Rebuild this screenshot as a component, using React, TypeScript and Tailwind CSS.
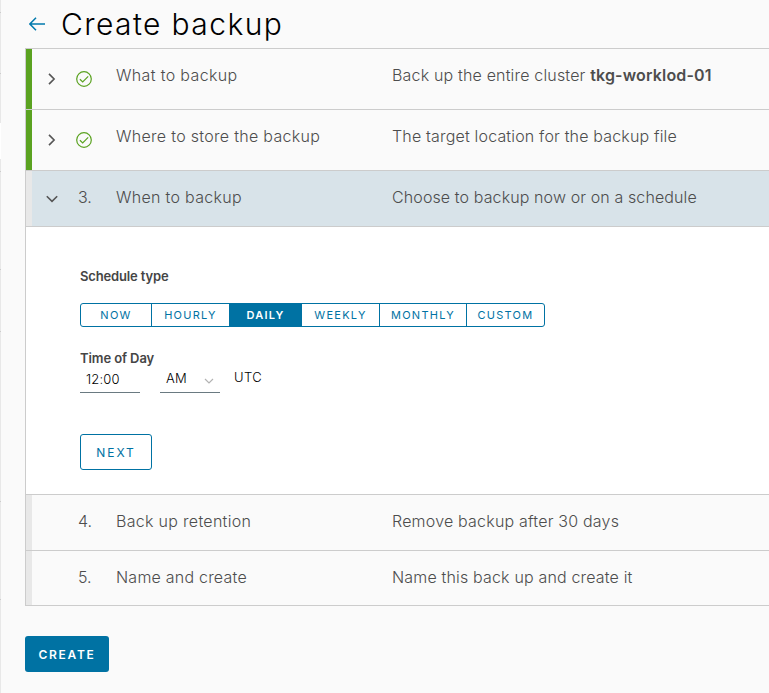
import React from "react";

const Chevron = ({ down = false }: { down?: boolean }) => (
  <svg width="12" height="12" viewBox="0 0 12 12" fill="none" stroke="#555" strokeWidth="1.6">
    {down ? <path d="M.8 3.2 6 8.4 11.2 3.2" /> : <path d="M3 .9 8.1 6 3 11.1" />}
  </svg>
);

const CheckCircle = () => (
  <svg width="16" height="16" viewBox="0 0 16 16" fill="none" stroke="#5aa220" strokeWidth="1.2">
    <circle cx="8" cy="8" r="7.3" />
    <path d="M3.9 8.2 6.7 10.9 12.2 5.4" />
  </svg>
);

type RowProps = {
  title: string;
  titleClass: string;
  description: React.ReactNode;
  descClass: string;
  number?: string;
  state: "done" | "active" | "todo";
  className: string;
};

function StepRow({ title, titleClass, description, descClass, number, state, className }: RowProps) {
  return (
    <div className={`flex border-t border-[#ccc] text-base leading-6 text-[#4d4d4d] ${className}`}>
      <div className={`w-1.5 shrink-0 ${state === "done" ? "bg-[#5aa220]" : "bg-[#e8e8e8]"}`} />
      <div className="flex w-[46px] shrink-0 pl-3.5">
        {state !== "todo" && (
          <div className={state === "done" ? "pt-6" : "pt-[22px]"}>
            <Chevron down={state === "active"} />
          </div>
        )}
      </div>
      <div className="w-[38px] shrink-0">
        {state === "done" ? (
          <div className="-ml-0.5 pt-[22px]"><CheckCircle /></div>
        ) : (
          <div className="pt-3.5">{number}</div>
        )}
      </div>
      <div className={`w-[276px] shrink-0 whitespace-nowrap pt-3.5 ${titleClass}`}>{title}</div>
      <div className={`whitespace-nowrap pt-3.5 ${descClass}`}>{description}</div>
    </div>
  );
}

const schedules = [
  { label: "NOW", width: "w-[70px]" },
  { label: "HOURLY", width: "w-[78px]" },
  { label: "DAILY", width: "w-[72px]" },
  { label: "WEEKLY", width: "w-[78px]" },
  { label: "MONTHLY", width: "w-[87px]" },
  { label: "CUSTOM", width: "w-[78px]" },
];

export default function App() {
  return (
    <div className="flex h-[693px] w-[769px] overflow-hidden bg-[#fafafa] font-['Inter',sans-serif] font-light">
      <div className="flex w-px shrink-0 flex-col bg-[#e8e8e8]">
        <div className="mt-3 h-px bg-[#ccc]" />
        <div className="mt-[60px] h-px bg-[#ccc]" />
        <div className="mt-[49px] h-9 bg-white" />
        <div className="mt-3 h-px bg-[#ccc]" />
        <div className="mt-[97px] h-px bg-[#ccc]" />
        <div className="mt-[61px] h-px bg-[#ccc]" />
        <div className="mt-[169px] h-px bg-[#ccc]" />
        <div className="mt-[97px] h-px bg-[#ccc]" />
      </div>
      <div className="flex min-w-0 grow flex-col pl-6">
        <header className="flex h-12 shrink-0 items-center gap-[15px]">
          <svg className="ml-1" width="17" height="14" viewBox="0 0 17 14" fill="none" stroke="#0079ad" strokeWidth="1.5">
            <path d="M16 7H1M7 .8.9 7 7 13.2" />
          </svg>
          <h1 className="whitespace-nowrap text-[30px] leading-9 tracking-[1.4px] text-black">Create backup</h1>
        </header>
        <main className="shrink-0 border-b border-l border-[#ccc]">
          <StepRow
            state="done"
            className="h-[61px]"
            title="What to backup"
            titleClass="tracking-[0.35px]"
            description={<>Back up the entire cluster <b className="font-semibold">tkg-worklod-01</b></>}
            descClass="tracking-[0.17px]"
          />
          <StepRow state="done" className="h-[61px]" title="Where to store the backup" titleClass="tracking-[0.3px]" description="The target location for the backup file" descClass="tracking-[0.17px]" />
          <StepRow state="active" number="3." className="h-14 bg-[#d8e3e9]" title="When to backup" titleClass="tracking-[0.3px]" description="Choose to backup now or on a schedule" descClass="tracking-[0.11px]" />
          <section className="flex h-[268px] flex-col items-start border-t border-[#ccc] bg-white pl-[54px] pt-10">
            <div className="h-[18px] text-[13px] font-semibold leading-[18px] tracking-[-0.15px] text-[#454545]">Schedule type</div>
            <div className="mt-[18px] flex h-6 overflow-hidden rounded-[3px] border border-[#0072a3] text-[11px] font-normal tracking-[1.25px] text-[#0072a3]">
              {schedules.map((s, i) => (
                <button
                  key={s.label}
                  className={`flex items-center justify-center ${s.width} ${i > 0 ? "border-l border-[#0072a3]" : ""} ${s.label === "DAILY" ? "bg-[#0072a3] font-semibold text-white" : ""}`}
                >
                  {s.label}
                </button>
              ))}
            </div>
            <div className="mt-[22px] h-[18px] text-[13px] font-semibold leading-[18px] tracking-[-0.1px] text-[#454545]">Time of Day</div>
            <div className="flex h-[26px] text-[13px] leading-[24px] text-black">
              <div className="w-[60px] border-b border-[#6a7a81] pl-1.5 tracking-[0.2px]">12:00</div>
              <div className="ml-5 flex w-[60px] items-center justify-between border-b border-[#6a7a81] pl-1.5 pr-1.5">
                <span className="-mt-[3px] tracking-[0.3px]">AM</span>
                <svg className="mt-0.5" width="10" height="8" viewBox="0 0 10 8" fill="none" stroke="#b3b3b3" strokeWidth="1.2">
                  <path d="M1 2 5 6 9 2" />
                </svg>
              </div>
              <div className="-mt-0.5 ml-3.5 tracking-[0.4px]">UTC</div>
            </div>
            <button className="mt-[41px] h-9 w-[72px] rounded-[3px] border border-[#0072a3] pt-px text-xs font-normal tracking-[1.9px] text-[#0072a3]">NEXT</button>
          </section>
          <StepRow state="todo" number="4." className="h-14" title="Back up retention" titleClass="tracking-[0.3px]" description="Remove backup after 30 days" descClass="tracking-[0.2px]" />
          <StepRow state="todo" number="5." className="h-[55px]" title="Name and create" titleClass="tracking-[0.22px]" description="Name this back up and create it" descClass="tracking-[0.17px]" />
        </main>
        <button className="mt-[30px] h-9 w-[84px] shrink-0 rounded-[3px] bg-[#0072a3] pt-0.5 text-xs font-semibold tracking-[1.7px] text-white">CREATE</button>
      </div>
    </div>
  );
}
